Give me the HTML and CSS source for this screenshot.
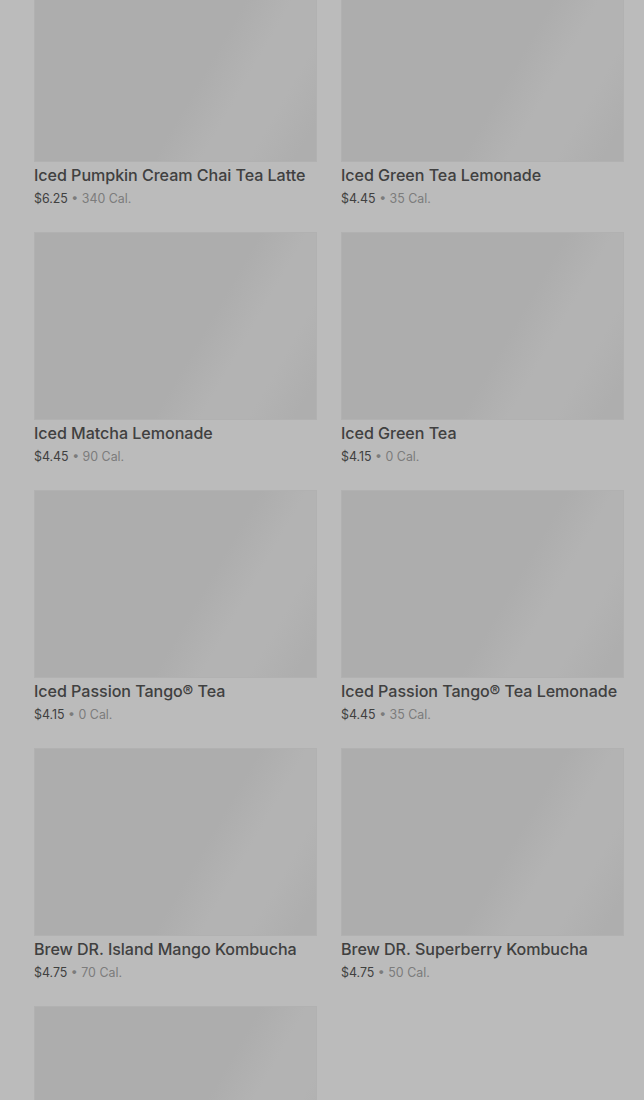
FILE: index.html
```html
<!DOCTYPE html>
<html>
<head>
<meta charset="utf-8">
<link rel="stylesheet" href="styles.css">
</head>
<body>
<main class="grid">
  <div class="card"><div class="thumb"></div><div class="name">Iced Pumpkin Cream Chai Tea Latte</div><div class="meta"><span class="price">$6.25</span> • 340 Cal.</div></div>
  <div class="card"><div class="thumb"></div><div class="name">Iced Green Tea Lemonade</div><div class="meta"><span class="price">$4.45</span> • 35 Cal.</div></div>
  <div class="card"><div class="thumb"></div><div class="name">Iced Matcha Lemonade</div><div class="meta"><span class="price">$4.45</span> • 90 Cal.</div></div>
  <div class="card"><div class="thumb"></div><div class="name">Iced Green Tea</div><div class="meta"><span class="price">$4.15</span> • 0 Cal.</div></div>
  <div class="card"><div class="thumb"></div><div class="name">Iced Passion Tango® Tea</div><div class="meta"><span class="price">$4.15</span> • 0 Cal.</div></div>
  <div class="card"><div class="thumb"></div><div class="name">Iced Passion Tango® Tea Lemonade</div><div class="meta"><span class="price">$4.45</span> • 35 Cal.</div></div>
  <div class="card"><div class="thumb"></div><div class="name">Brew DR. Island Mango Kombucha</div><div class="meta"><span class="price">$4.75</span> • 70 Cal.</div></div>
  <div class="card"><div class="thumb"></div><div class="name">Brew DR. Superberry Kombucha</div><div class="meta"><span class="price">$4.75</span> • 50 Cal.</div></div>
  <div class="card"><div class="thumb"></div><div class="name">&nbsp;</div><div class="meta">&nbsp;</div></div>
</main>
</body>
</html>
```
FILE: styles.css
```css
html, body {
  margin: 0;
  padding: 0;
  background: #bbbbbb;
  height: 1100px;
  overflow: hidden;
}
.grid {
  display: grid;
  grid-template-columns: 283px 283px;
  column-gap: 24px;
  row-gap: 0;
  padding: 0 20px 0 34px;
  margin-top: -26px;
  font-family: Inter, "Noto Sans", sans-serif;
}
.card {
  display: flex;
  flex-direction: column;
  height: 258px;
}
.thumb {
  height: 188px;
  background: linear-gradient(120deg, #adadad 0%, #adadad 58%, #b3b3b3 70%, #b3b3b3 82%, #aeaeae 94%);
  box-shadow: inset 0 0 0 1px #b1b1b1;
}
.name {
  margin-top: 3px;
  font-size: 16.1px;
  font-weight: 500;
  color: #404040;
  line-height: 20px;
  letter-spacing: -0.05px;
  white-space: nowrap;
}
.meta {
  margin-top: 5px;
  font-size: 12.4px;
  line-height: 17px;
  color: #7c7c7c;
}
.price {
  color: #404040;
}
```
